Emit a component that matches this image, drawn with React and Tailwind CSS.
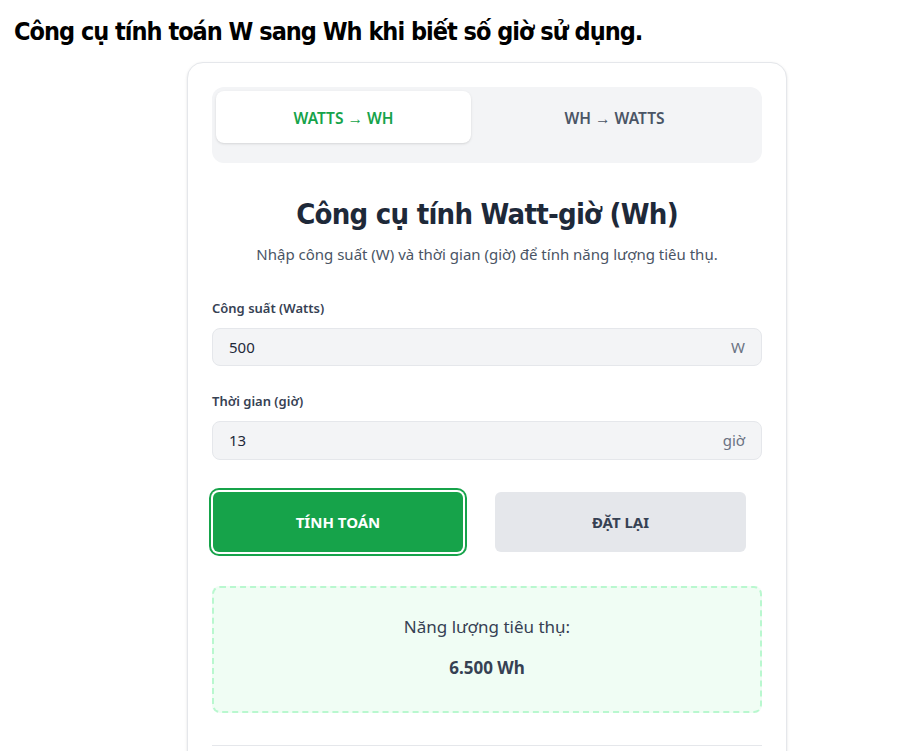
import React from "react";

const body = { fontFamily: '"Noto Sans", "Open Sans", sans-serif' };
const cond = { fontFamily: '"DejaVu Sans Condensed", "DejaVu Sans", sans-serif' };

export default function App() {
  return (
    <div className="min-h-[751px] bg-white text-gray-800" style={body}>
      <h1
        className="pl-[14px] pt-[14px] text-[25px] leading-[36px] font-bold text-black tracking-[-1px]"
        style={cond}
      >
        Công cụ tính toán W sang Wh khi biết số giờ sử dụng.
      </h1>
      <div className="ml-[187px] mt-[12px] w-[600px] rounded-2xl border border-gray-200 bg-white px-6 pt-6 pb-10 shadow-sm">
        <div className="flex rounded-xl bg-gray-100 p-1 pb-5">
          <button className="h-[52px] w-[255px] rounded-lg bg-white pt-[3px] text-[15.5px] font-semibold text-[#16a34a] shadow">
            WATTS → WH
          </button>
          <button className="h-[52px] flex-1 pt-[3px] text-[15.5px] font-semibold text-gray-600">
            WH → WATTS
          </button>
        </div>
        <h2
          className="mt-[31px] text-center text-[29px] leading-[40px] font-bold text-gray-800 tracking-[-0.75px]"
          style={cond}
        >
          Công cụ tính Watt-giờ (Wh)
        </h2>
        <p className="mt-[10px] text-center text-[15px] leading-[20px] text-gray-600">
          Nhập công suất (W) và thời gian (giờ) để tính năng lượng tiêu thụ.
        </p>
        <label className="mt-[35px] block text-[13px] font-semibold leading-[18px] text-gray-700">
          Công suất (Watts)
        </label>
        <div className="mt-[11px] flex h-[38px] items-center justify-between rounded-lg border border-gray-200 bg-gray-100 px-4 text-[15px]">
          <span className="text-gray-800">500</span>
          <span className="text-gray-500">W</span>
        </div>
        <label className="mt-[26px] block text-[13px] font-semibold leading-[18px] text-gray-700">
          Thời gian (giờ)
        </label>
        <div className="mt-[11px] flex h-[39px] items-center justify-between rounded-lg border border-gray-200 bg-gray-100 px-4 text-[15px]">
          <span className="text-gray-800">13</span>
          <span className="text-gray-500">giờ</span>
        </div>
        <div className="mt-[32px] flex gap-[32px] pl-[1px]">
          <button className="h-[60px] w-[250px] rounded-md bg-[#16a34a] text-[15px] font-bold text-white ring-2 ring-[#16a34a] ring-offset-2">
            TÍNH TOÁN
          </button>
          <button className="h-[60px] w-[251px] rounded-md bg-gray-200 text-[15px] font-bold text-gray-700">
            ĐẶT LẠI
          </button>
        </div>
        <div className="mt-[34px] flex h-[127px] flex-col items-center justify-center rounded-lg border-2 border-dashed border-green-200 bg-green-50">
          <p className="-mt-[5px] text-[17px] text-gray-700">Năng lượng tiêu thụ:</p>
          <p className="mt-[15px] text-[17px] font-bold text-gray-700">6.500 Wh</p>
        </div>
        <div className="mt-[32px] border-t border-gray-200" />
        <div className="h-[40px]" />
      </div>
    </div>
  );
}
